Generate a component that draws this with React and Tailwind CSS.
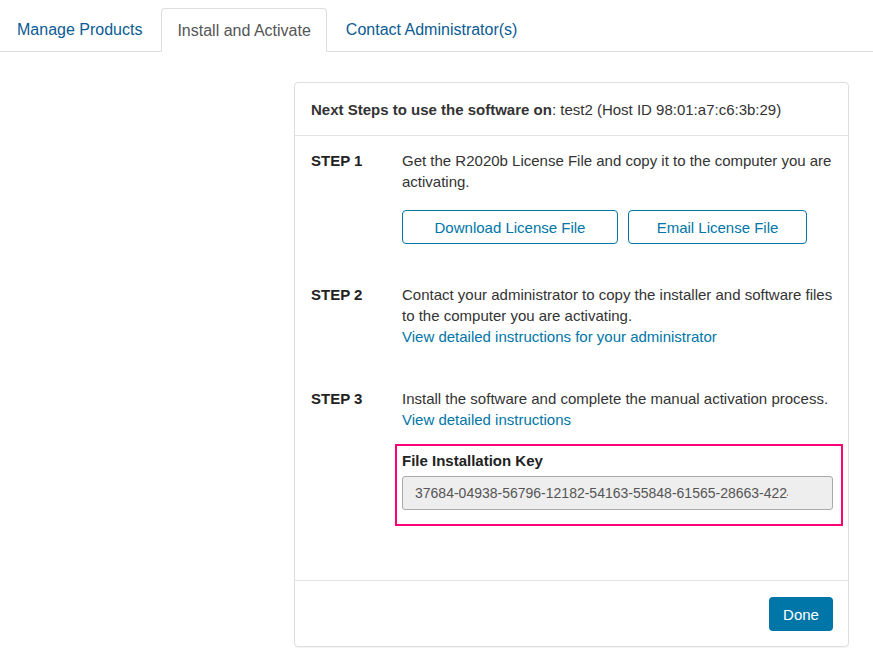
import React from 'react';

const tabs = ['Manage Products', 'Install and Activate', 'Contact Administrator(s)'];

const Step = ({ label, children, className = '' }) => (
    <div className={`flex ${className}`}>
        <div className="w-[91px] shrink-0 font-bold text-[#222]">{label}</div>
        <div className="flex-1 min-w-0 text-[#333]">{children}</div>
    </div>
);

const App = () => {
    const active = 1;
    return (
        <div className="min-h-screen bg-white font-['Liberation_Sans',Arial,sans-serif] text-[15px] leading-[21px]">
            {/* Tabs */}
            <div className="flex pt-[8px] border-b border-[#ddd]">
                {tabs.map((t, i) => (
                    <div
                        key={t}
                        className={
                            i === active
                                ? 'h-[44px] -mb-px mr-[2px] px-[15px] flex items-center text-[16px] text-[#555] bg-white border border-[#ddd] border-b-white rounded-t-[4px]'
                                : 'h-[43px] mr-[2px] px-[16px] flex items-center text-[16px] text-[#0b5b94] border border-transparent'
                        }
                    >
                        {t}
                    </div>
                ))}
            </div>

            {/* Card */}
            <div className="ml-[294px] mr-[24px] mt-[30px] border border-[#ddd] rounded-[4px] shadow-[0_1px_1px_rgba(0,0,0,0.05)]">
                <div className="px-[16px] pt-[16px] pb-[15px] border-b border-[#e3e3e3] text-[#333]">
                    <span className="font-bold">Next Steps to use the software on</span>: test2 (Host ID 98:01:a7:c6:3b:29)
                </div>

                <div className="pl-[16px] pr-[15px] pt-[14px] pb-[54px]">
                    <Step label="STEP 1">
                        <p>Get the R2020b License File and copy it to the computer you are activating.</p>
                        <div className="flex gap-[10px] mt-[18px]">
                            <button className="w-[216px] h-[34px] border border-[#0076a8] rounded-[4px] text-[#0076a8]">
                                Download License File
                            </button>
                            <button className="w-[179px] h-[34px] border border-[#0076a8] rounded-[4px] text-[#0076a8]">
                                Email License File
                            </button>
                        </div>
                    </Step>

                    <Step label="STEP 2" className="mt-[40px]">
                        <p>Contact your administrator to copy the installer and software files to the computer you are activating.</p>
                        <a className="text-[#0076a8]">View detailed instructions for your administrator</a>
                    </Step>

                    <Step label="STEP 3" className="mt-[41px]">
                        <p>Install the software and complete the manual activation process.</p>
                        <a className="text-[#0076a8]">View detailed instructions</a>
                        <div className="-ml-[7px] -mr-[10px] mt-[14px] border-2 border-[#ff0077] pl-[5px] pr-[8px] pt-[4px] pb-[14px]">
                            <div className="font-bold text-[#222]">File Installation Key</div>
                            <div className="mt-[5px] h-[34px] border border-[#aaa] rounded-[3px] bg-[#eee] flex items-center pl-[12px] pr-[44px] overflow-hidden whitespace-nowrap text-[14px] text-[#555]">
                                <span className="overflow-hidden">37684-04938-56796-12182-54163-55848-61565-28663-42247</span>
                            </div>
                        </div>
                    </Step>
                </div>

                <div className="border-t border-[#e3e3e3] px-[15px] pt-[16px] pb-[15px] flex justify-end">
                    <button className="w-[64px] h-[34px] rounded-[4px] bg-[#0076a8] text-white">Done</button>
                </div>
            </div>
        </div>
    );
};

export default App;
